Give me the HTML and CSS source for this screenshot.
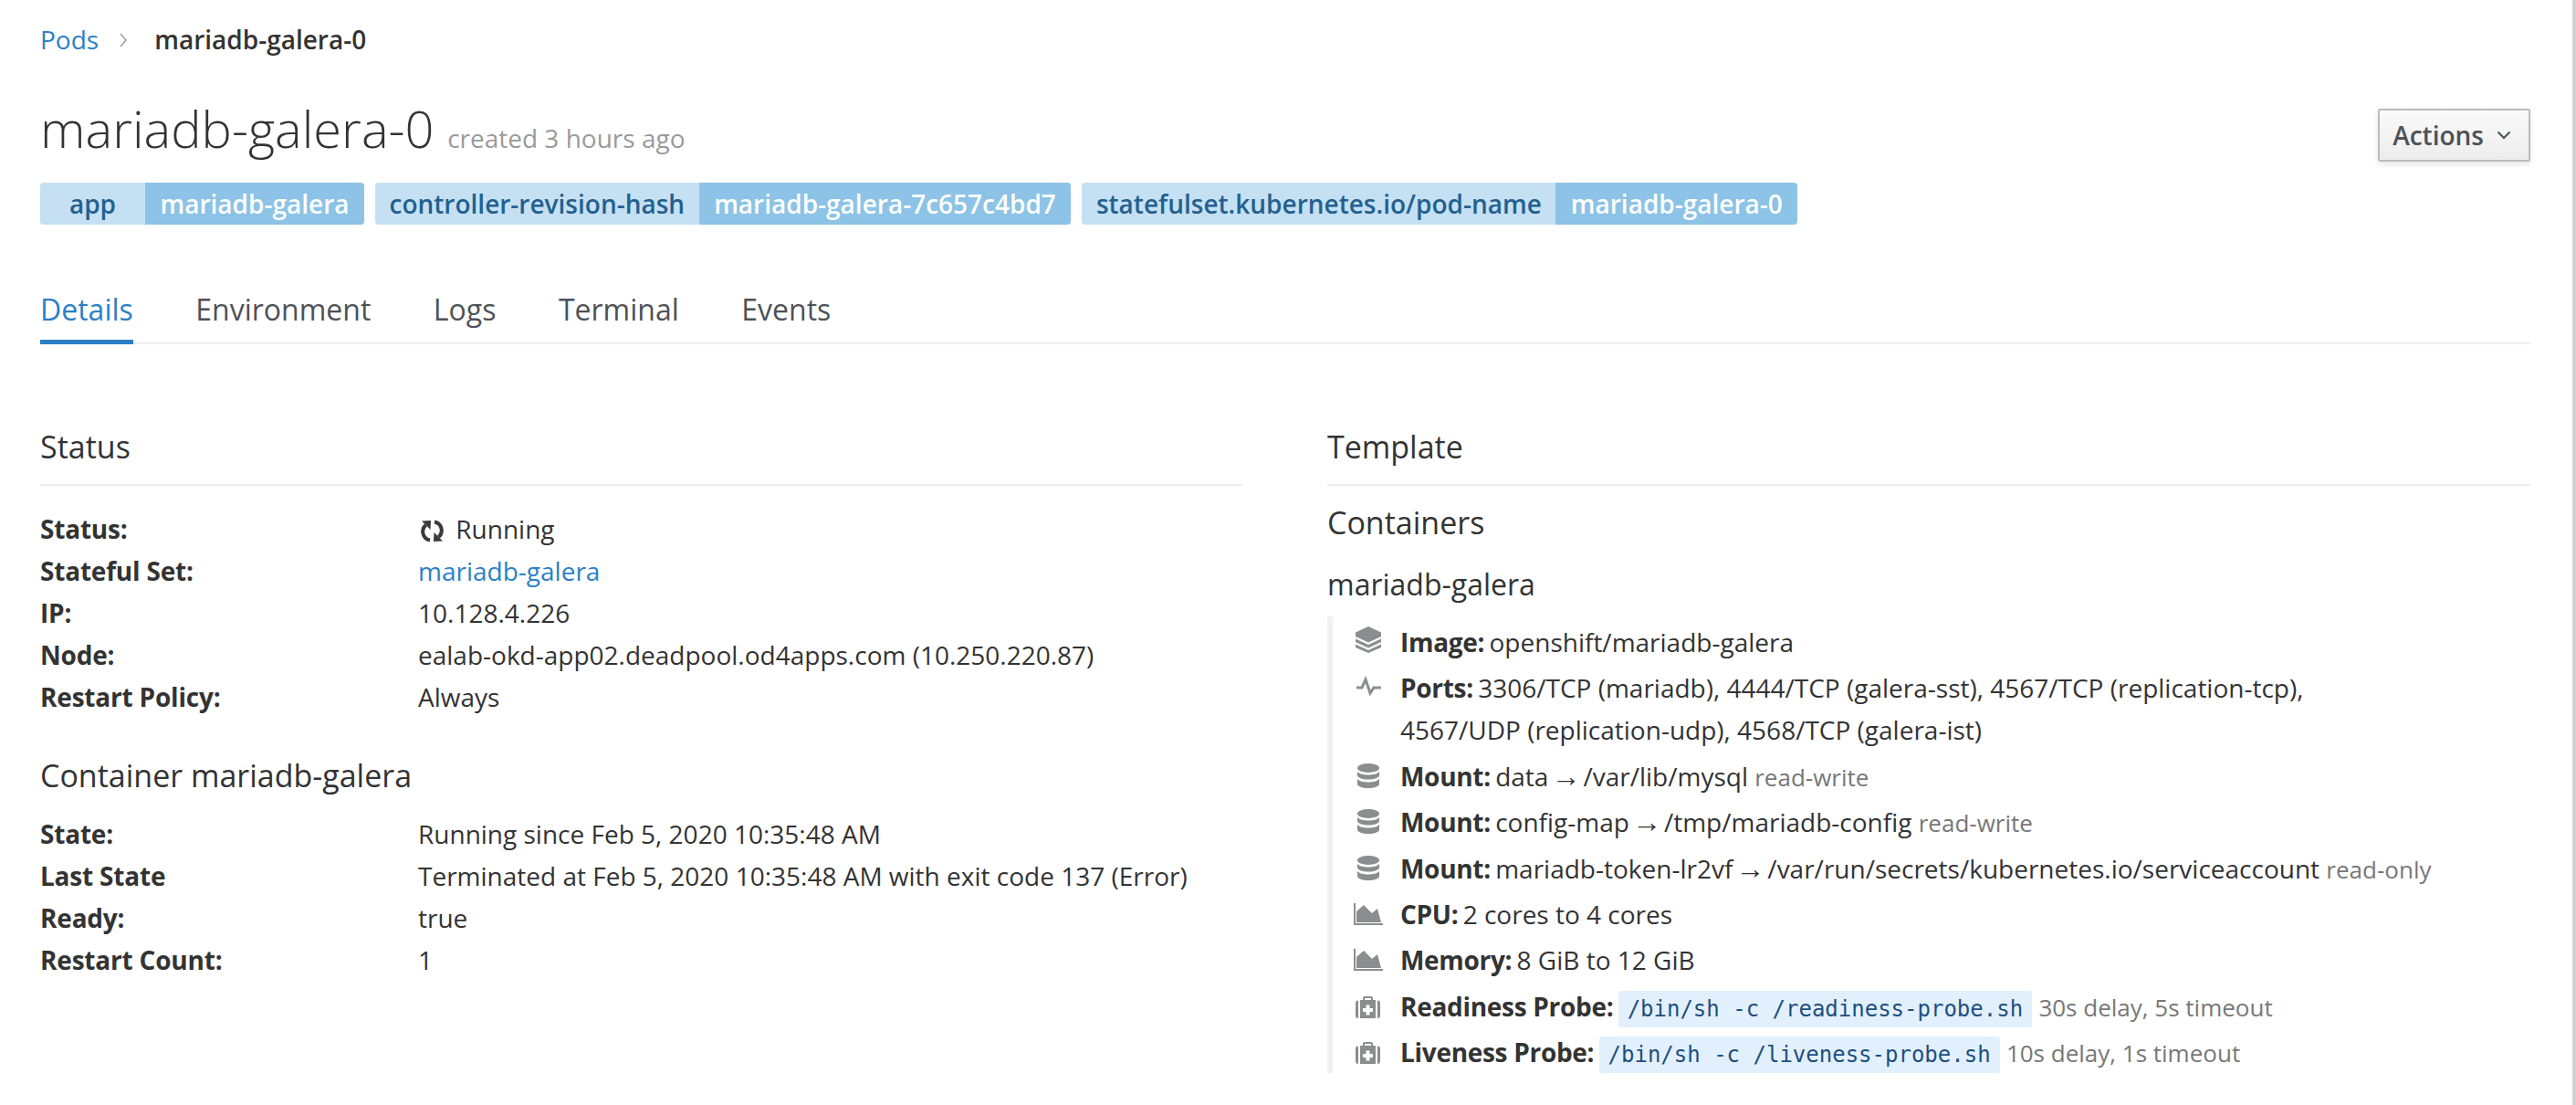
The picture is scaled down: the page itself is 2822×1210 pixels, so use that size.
FILE: index.html
```html
<!DOCTYPE html>
<html lang="en">
<head>
  <meta charset="UTF-8" />
  <title>mariadb-galera-0 · Pod Details</title>
  <link rel="stylesheet" href="styles.css">
</head>
<body>

  <nav class="breadcrumb">
    <a href="#">Pods</a>
    <svg class="crumb-sep" viewBox="0 0 10 18"><path d="M2 2l6 7-6 7" /></svg>
    <strong>mariadb-galera-0</strong>
  </nav>

  <header class="page-head">
    <div>
      <h1>mariadb-galera-0 <small>created 3 hours ago</small></h1>
      <div class="labels">
        <span class="label"><span class="label-key label-key-short">app</span><span class="label-val">mariadb-galera</span></span>
        <span class="label"><span class="label-key">controller-revision-hash</span><span class="label-val">mariadb-galera-7c657c4bd7</span></span>
        <span class="label"><span class="label-key">statefulset.kubernetes.io/pod-name</span><span class="label-val">mariadb-galera-0</span></span>
      </div>
    </div>
    <button class="actions">Actions
      <svg viewBox="0 0 16 10"><path d="M1.5 1.5L8 8l6.5-6.5" /></svg>
    </button>
  </header>

  <ul class="tabs">
    <li class="active"><a href="#">Details</a></li>
    <li><a href="#">Environment</a></li>
    <li><a href="#">Logs</a></li>
    <li><a href="#">Terminal</a></li>
    <li><a href="#">Events</a></li>
  </ul>

  <main class="columns">
    <section>
      <h2>Status</h2>
      <dl class="facts">
        <dt>Status:</dt>
        <dd>
          <svg class="icon-running" viewBox="0 0 25 25">
            <path class="arc" d="M10 22.500A9.500 9.500 0 0 1 5.500 6" />
            <path d="M1 1.500l10-.5-.5 10z" />
            <path class="arc" d="M15 2.500A9.500 9.500 0 0 1 19.500 19" />
            <path d="M24 23.500l-10 .5.5-10z" />
          </svg>
          Running
        </dd>
        <dt>Stateful Set:</dt>
        <dd><a href="#">mariadb-galera</a></dd>
        <dt>IP:</dt>
        <dd>10.128.4.226</dd>
        <dt>Node:</dt>
        <dd>ealab-okd-app02.deadpool.od4apps.com (10.250.220.87)</dd>
        <dt>Restart Policy:</dt>
        <dd>Always</dd>
      </dl>
      <h3 class="sub-container">Container mariadb-galera</h3>
      <dl class="facts">
        <dt>State:</dt>
        <dd>Running since Feb 5, 2020 10:35:48 AM</dd>
        <dt>Last State</dt>
        <dd>Terminated at Feb 5, 2020 10:35:48 AM with exit code 137 (Error)</dd>
        <dt>Ready:</dt>
        <dd>true</dd>
        <dt>Restart Count:</dt>
        <dd>1</dd>
      </dl>
    </section>

    <section>
      <h2>Template</h2>
      <h3 class="sub-containers">Containers</h3>
      <h4>mariadb-galera</h4>
      <ul class="spec">
        <li>
          <svg class="spec-icon" viewBox="0 0 29 29"><path d="M14 0l14 6.500v4.500L14 17.500 0 11V6.500z" /><path d="M0 13.500L14 20l14-6.500v3.500L14 23.500 0 17z" /><path d="M0 19.500L14 26l14-6.500V23l-14 6-14-6z" /></svg>
          <div><b>Image:</b> openshift/mariadb-galera</div>
        </li>
        <li>
          <svg class="spec-icon spec-line" viewBox="0 0 29 29"><path d="M1 17h6l4-9 5 15 4-6h8" /></svg>
          <div><b>Ports:</b> 3306/TCP (mariadb), 4444/TCP (galera-sst), 4567/TCP (replication-tcp),<br>4567/UDP (replication-udp), 4568/TCP (galera-ist)</div>
        </li>
        <li>
          <svg class="spec-icon" viewBox="-2 -3 29 29"><use href="#db" /></svg>
          <div><b>Mount:</b> data<span class="arrow">→</span>/var/lib/mysql <span class="muted">read-write</span></div>
        </li>
        <li>
          <svg class="spec-icon" viewBox="-2 -3 29 29"><use href="#db" /></svg>
          <div><b>Mount:</b> config-map<span class="arrow">→</span>/tmp/mariadb-config <span class="muted">read-write</span></div>
        </li>
        <li>
          <svg class="spec-icon" viewBox="-2 -3 29 29"><use href="#db" /></svg>
          <div><b>Mount:</b> mariadb-token-lr2vf<span class="arrow">→</span>/var/run/secrets/kubernetes.io/serviceaccount <span class="muted">read-only</span></div>
        </li>
        <li>
          <svg class="spec-icon" viewBox="2 -5 29 29"><use href="#area" /></svg>
          <div><b>CPU:</b> 2 cores to 4 cores</div>
        </li>
        <li>
          <svg class="spec-icon" viewBox="2 -5 29 29"><use href="#area" /></svg>
          <div><b>Memory:</b> 8 GiB to 12 GiB</div>
        </li>
        <li>
          <svg class="spec-icon" viewBox="0 -6 29 29"><use href="#kit" /></svg>
          <div><b>Readiness Probe:</b> <code>/bin/sh -c /readiness-probe.sh</code> <span class="muted">30s delay, 5s timeout</span></div>
        </li>
        <li>
          <svg class="spec-icon" viewBox="0 -6 29 29"><use href="#kit" /></svg>
          <div><b>Liveness Probe:</b> <code>/bin/sh -c /liveness-probe.sh</code> <span class="muted">10s delay, 1s timeout</span></div>
        </li>
      </ul>
    </section>
  </main>

  <!-- shared icons -->
  <svg class="defs" aria-hidden="true">
    <defs>
      <g id="db">
        <ellipse cx="12" cy="5" rx="12" ry="5" />
        <path d="M0 9c2 2.500 7 3.500 12 3.500s10-1 12-3.500v4c0 2.600-5.400 4.500-12 4.500S0 15.600 0 13z" />
        <path d="M0 17c2 2.500 7 3.500 12 3.500s10-1 12-3.500v5.500c0 2.600-5.400 4.500-12 4.500S0 25.100 0 22.500z" />
      </g>
      <g id="area">
        <path d="M0 0h2v22h30v2H0z" />
        <path d="M3 21V9l8-7 9 9 6-5 4 15z" />
      </g>
      <g id="kit">
        <path fill-rule="evenodd" d="M5 4h3V2a2 2 0 0 1 2-2h7a2 2 0 0 1 2 2v2h3v20H5zm5 0h7V2h-7zm1.500 5.500v3.500H8v4h3.500v3.500h4V17H19v-4h-3.500V9.500z" />
        <path d="M3 4.500V24a3 3 0 0 1-3-3V7.500a3 3 0 0 1 3-3zM24 4.500a3 3 0 0 1 3 3V21a3 3 0 0 1-3 3z" />
      </g>
    </defs>
  </svg>

</body>
</html>
```

FILE: styles.css
```css
* {
  box-sizing: border-box;
}
html {
  height: 100%;
}
body {
  margin: 0;
  height: 100%;
  overflow: hidden;
  padding: 20px 46px 0 44px;
  border-right: 4px solid #d1d1d1;
  background: #fff;
  color: #333;
  font-family: "Open Sans", sans-serif;
  font-size: 28px;
  line-height: 46px;
}
a {
  color: #2b7fc7;
  text-decoration: none;
}
.defs {
  display: none;
}

/* breadcrumb */
.breadcrumb {
  display: flex;
  align-items: center;
}
.breadcrumb strong {
  font-weight: 600;
}
.crumb-sep {
  width: 10px;
  height: 18px;
  margin: 2px 29px 0 22px;
  fill: none;
  stroke: #a0a0a0;
  stroke-width: 1.6;
}

/* title + labels */
.page-head {
  display: flex;
  justify-content: space-between;
  align-items: flex-start;
  margin-top: 39px;
}
h1 {
  margin: 0;
  font-size: 56px;
  font-weight: 300;
  line-height: 70px;
}
h1 small {
  font-size: 28px;
  font-weight: 400;
  color: #9a9a9a;
}
.labels {
  display: flex;
  gap: 12px;
  margin-top: 14px;
}
.label {
  display: flex;
  height: 46px;
  border-radius: 4px;
  overflow: hidden;
  font-weight: 600;
  line-height: 46px;
}
.label-key {
  padding: 0 15.5px;
  background: #c5e0f3;
  color: #23608f;
}
.label-key-short {
  min-width: 115px;
  text-align: center;
}
.label-val {
  padding: 0 16.5px;
  background: #8cc3e6;
  color: #fff;
}
.actions {
  display: flex;
  align-items: center;
  gap: 14px;
  height: 58px;
  margin-top: 14px;
  padding: 0 19px 0 14px;
  border: 2px solid #bbb;
  border-radius: 2px;
  background: linear-gradient(#fafafa, #ededed);
  box-shadow: 0 3px 6px rgba(0,0,0,0.1);
  color: #4d5258;
  font-family: inherit;
  font-size: 28px;
  font-weight: 600;
}
.actions svg {
  width: 16px;
  height: 10px;
  fill: none;
  stroke: #4d5258;
  stroke-width: 2;
}

/* tabs */
.tabs {
  display: flex;
  gap: 68.5px;
  margin: 70px 0 0;
  padding: 0;
  list-style: none;
  border-bottom: 2px solid #ededed;
  font-size: 32px;
}
.tabs a {
  display: block;
  padding-bottom: 10px;
  color: #4d5258;
}
.tabs li {
  margin-bottom: -2px;
  border-bottom: 5px solid transparent;
}
.tabs .active {
  border-bottom-color: #2b7fc7;
}
.tabs .active a {
  color: #2b7fc7;
}

/* two columns */
.columns {
  display: grid;
  grid-template-columns: 1317px 1318px;
  gap: 93px;
  margin-top: 89px;
}
h2 {
  margin: 0;
  padding-bottom: 18px;
  border-bottom: 2px solid #ededed;
  font-size: 34px;
  font-weight: 400;
}
h3 {
  margin: 0;
  font-size: 34px;
  font-weight: 400;
}
h4 {
  margin: 22px 0 0;
  font-size: 32px;
  font-weight: 400;
}
.sub-container {
  margin: 40px 0 18px;
}
.sub-containers {
  margin-top: 17px;
}

.facts {
  display: grid;
  grid-template-columns: 414px 1fr;
  margin: 0;
}
h2 + .facts {
  margin-top: 24px;
}
.facts dt {
  font-weight: 700;
  letter-spacing: -0.2px;
}
.facts dd {
  margin: 0;
}
.icon-running {
  width: 25px;
  height: 25px;
  margin: 0 6px 0 3px;
  vertical-align: -4px;
  fill: #3a3a3a;
}
.icon-running .arc {
  fill: none;
  stroke: #3a3a3a;
  stroke-width: 4;
}

/* container spec list */
.spec {
  margin: 12px 0 0;
  padding: 5px 0 0 25px;
  list-style: none;
  border-left: 6px solid #f1f1f1;
}
.spec li {
  display: flex;
  gap: 20px;
  margin-bottom: 4.4px;
}
.spec li:last-child {
  margin-bottom: 0;
}
.spec-icon {
  flex: none;
  width: 29px;
  height: 29px;
  margin-top: 6px;
  overflow: visible;
  fill: #8b8d8f;
}
.spec-line {
  fill: none;
  stroke: #8b8d8f;
  stroke-width: 3;
}
.spec b {
  margin-right: -2px;
  font-weight: 700;
  letter-spacing: -0.3px;
}
.arrow {
  margin: 0 3px;
  font-family: "Liberation Sans", sans-serif;
  font-size: 32px;
  line-height: 1;
}
.muted {
  color: #777;
  font-size: 26px;
  line-height: 1;
}
code {
  padding: 6px 10px;
  border-radius: 3px;
  background: #e1f0fc;
  color: #1e4f7c;
  font-family: "DejaVu Sans Mono", monospace;
  font-size: 24px;
  line-height: 1;
}
```
